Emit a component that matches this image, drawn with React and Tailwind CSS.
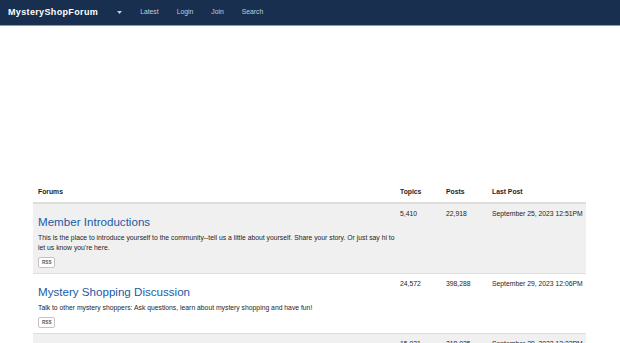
const forums = [
  {
    title: "Member Introductions",
    desc: "This is the place to introduce yourself to the community--tell us a little about yourself. Share your story. Or just say hi to let us know you're here.",
    topics: "5,410",
    posts: "22,918",
    last: "September 25, 2023 12:51PM",
  },
  {
    title: "Mystery Shopping Discussion",
    desc: "Talk to other mystery shoppers: Ask questions, learn about mystery shopping and have fun!",
    topics: "24,572",
    posts: "398,288",
    last: "September 29, 2023 12:06PM",
  },
  {
    title: "Mystery Shopping Companies",
    desc: "Discuss mystery shopping companies and their shops.",
    topics: "15,031",
    posts: "218,035",
    last: "September 29, 2023 12:32PM",
  },
];

export default function App() {
  return (
    <div
      className="h-screen overflow-hidden bg-white text-[#1e1e1e]"
      style={{ fontFamily: '"Liberation Sans", Arial, sans-serif' }}
    >
      {/* Navbar */}
      <div className="h-[26px] bg-[#182f50] border-b border-[#8c98ab] flex items-center pl-[8px]">
        <span className="text-[9px] font-bold tracking-[0.35px] text-white">
          MysteryShopForum
        </span>
        <div className="flex items-center ml-[10px] text-[6.8px] text-[#c3ccd8]">
          <span className="px-[9px] flex items-center">
            <svg width="5" height="3" viewBox="0 0 5 3">
              <path d="M0 0h5L2.5 3z" fill="#c3ccd8" />
            </svg>
          </span>
          <span className="px-[9px]">Latest</span>
          <span className="px-[9px]">Login</span>
          <span className="px-[9px]">Join</span>
          <span className="px-[9px]">Search</span>
        </div>
      </div>

      {/* ad space */}
      <div className="h-[156px]" />

      <div className="w-[553px] ml-[33px] text-[6.8px] leading-[10px]">
        {/* Header */}
        <div className="flex font-bold border-b-2 border-[#dedede] py-[5px]">
          <div className="w-[362px] pl-[5px]">Forums</div>
          <div className="w-[46px] pl-[5px]">Topics</div>
          <div className="w-[46px] pl-[5px]">Posts</div>
          <div className="flex-1 pl-[5px]">Last Post</div>
        </div>

        {forums.map((f, i) => (
          <div
            key={f.title}
            className={`flex ${i > 0 ? "border-t border-[#dedede]" : ""} ${
              i % 2 === 0 ? "bg-[#f0f0f0]" : "bg-white"
            }`}
          >
            <div className="w-[362px] pl-[5px] pt-[5px] pb-[5px]">
              <div className="mt-[5px] text-[11.6px] leading-[16px] text-[#1a5aa8]">
                {f.title}
              </div>
              <div className="mt-[3px] text-[6.8px] leading-[10px] text-[#1e1e1e]">
                {f.desc}
              </div>
              <div className="mt-[4px] flex w-fit items-center justify-center h-[11px] px-[3px] border border-[#c4c4c4] rounded-[2px] bg-white text-[4.6px] leading-[9px] font-bold text-[#555]">
                RSS
              </div>
            </div>
            <div className="w-[46px] pl-[5px] pt-[5px]">{f.topics}</div>
            <div className="w-[46px] pl-[5px] pt-[5px]">{f.posts}</div>
            <div className="flex-1 pl-[5px] pt-[5px] whitespace-nowrap">{f.last}</div>
          </div>
        ))}
      </div>
    </div>
  );
}
